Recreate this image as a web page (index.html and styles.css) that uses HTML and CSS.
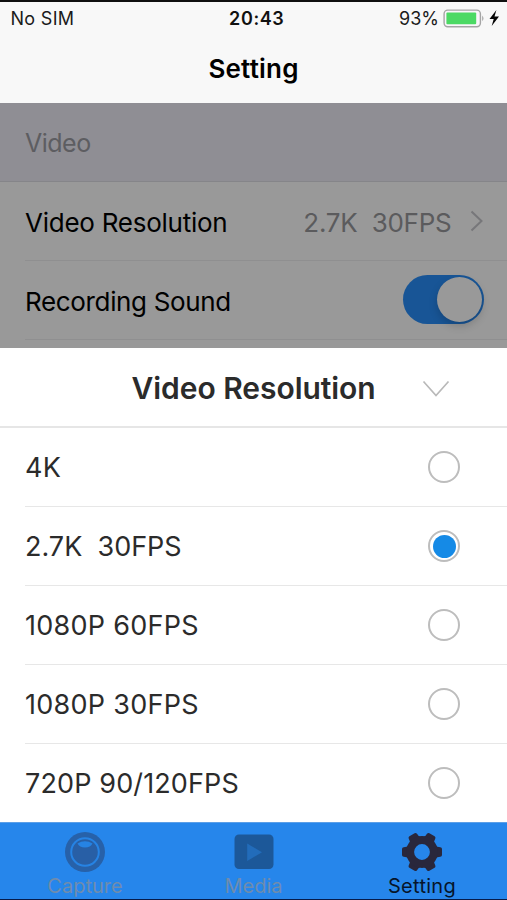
FILE: index.html
```
<!DOCTYPE html>
<html lang="en">
<head>
<meta charset="utf-8">
<title>Setting</title>
<link rel="stylesheet" href="styles.css">
</head>
<body>
<div class="screen">
  <header class="top">
    <div class="status">
      <span class="carrier">No SIM</span>
      <span class="clock">20:43</span>
      <span class="power">
        <span class="percent">93%</span>
        <svg class="battery" width="57" height="20" viewBox="0 0 57 20">
          <rect x="1.1" y="1.1" width="36.3" height="16.6" rx="3.6" fill="#fbf5fb" stroke="#a5a5a5" stroke-width="1.4"/>
          <rect x="3.4" y="3.5" width="29.8" height="11.8" rx="1" fill="#4cd964"/>
          <path d="M39.2 6.500q2.600 2.900 0 5.800z" fill="#a5a5a5"/>
          <path d="M53.400 1 46.500 9.900h4.200l-2 7.100 7.300-9.400h-4.500z" fill="#050505"/>
        </svg>
      </span>
    </div>
    <h1 class="page-title">Setting</h1>
  </header>

  <main class="settings">
    <h2 class="section">Video</h2>
    <div class="setting">
      <span class="name name-resolution">Video Resolution</span>
      <span class="value">2.7K&nbsp; 30FPS</span>
      <svg class="chevron" width="14" height="22" viewBox="0 0 14 22"><path d="M1.5 1.5 11.5 11 1.5 20.5" fill="none" stroke="#77777a" stroke-width="2"/></svg>
    </div>
    <div class="setting">
      <span class="name name-sound">Recording Sound</span>
      <span class="toggle"><span class="knob"></span></span>
    </div>
    <div class="setting setting-cut"></div>
  </main>

  <section class="sheet">
    <div class="sheet-head">
      <h2 class="sheet-title">Video Resolution</h2>
      <svg class="collapse" width="28" height="18" viewBox="0 0 28 18"><path d="M1.5 1.5 14 15.5 26.5 1.5" fill="none" stroke="#b9b9b9" stroke-width="1.7"/></svg>
    </div>
    <ul class="options">
      <li class="option"><span class="label">4K</span><span class="radio"></span></li>
      <li class="option"><span class="label fps-27">2.7K&nbsp; 30FPS</span><span class="radio selected"></span></li>
      <li class="option"><span class="label">1080P 60FPS</span><span class="radio"></span></li>
      <li class="option"><span class="label">1080P 30FPS</span><span class="radio"></span></li>
      <li class="option"><span class="label fps-720">720P 90/120FPS</span><span class="radio"></span></li>
    </ul>
  </section>

  <nav class="tabs">
    <div class="tab">
      <svg width="42" height="42" viewBox="0 0 42 42">
        <circle cx="21" cy="21" r="20" fill="#2761a9"/>
        <circle cx="21" cy="21" r="13.8" fill="#285fa6" stroke="#2683e4" stroke-width="2"/>
        <path d="M13.500 12.500q7.500-4.500 15 0-2 4-7.500 4t-7.500-4z" fill="#2683e4"/>
      </svg>
      <span class="tab-name capture">Capture</span>
    </div>
    <div class="tab">
      <svg width="42" height="42" viewBox="0 0 42 42">
        <rect x="1.500" y="3.500" width="39" height="34.500" rx="4.500" fill="#1c5899"/>
        <path d="M14.200 12.500v17.500L29 21.200z" fill="#226cba"/>
      </svg>
      <span class="tab-name media">Media</span>
    </div>
    <div class="tab active">
      <svg width="42" height="42" viewBox="0 0 42 42">
        <defs>
          <path id="tooth" d="M32 11q2.200 4.500 4.600 4.800l2.700.4q1.700.3 1.700 1.800v6q0 1.500-1.700 1.800l-2.700.4q-2.400.300-4.600 4.800z"/>
        </defs>
        <g fill="#29273c">
          <use href="#tooth"/>
          <use href="#tooth" transform="rotate(60 21 21)"/>
          <use href="#tooth" transform="rotate(120 21 21)"/>
          <use href="#tooth" transform="rotate(180 21 21)"/>
          <use href="#tooth" transform="rotate(240 21 21)"/>
          <use href="#tooth" transform="rotate(300 21 21)"/>
        </g>
        <circle cx="21" cy="21" r="11.900" fill="none" stroke="#29273c" stroke-width="8"/>
      </svg>
      <span class="tab-name setting-name">Setting</span>
    </div>
  </nav>
</div>
</body>
</html>
```
FILE: styles.css
```
* { box-sizing: border-box; }

body {
  margin: 0;
  background: #f8f8f8;
  color: #000;
  font-family: Inter, "Liberation Sans", sans-serif;
}

h1, h2, ul { margin: 0; padding: 0; }

.screen {
  width: 507px;
  height: 900px;
  display: flex;
  flex-direction: column;
  overflow: hidden;
  white-space: nowrap;
}

.top {
  height: 103px;
  flex: none;
  background: #f8f8f8;
  border-top: 2px solid #101010;
}

.status {
  height: 32px;
  padding: 1px 7px 0 10.5px;
  display: grid;
  grid-template-columns: 1fr auto 1fr;
  align-items: center;
  font-size: 18px;
  line-height: 32px;
  color: #1b1b1b;
}

.carrier { letter-spacing: .3px; }

.clock {
  padding-left: 3px;
  font-weight: 600;
  letter-spacing: .6px;
  color: #111;
}

.power {
  display: flex;
  align-items: center;
  justify-content: flex-end;
  gap: 4px;
}

.page-title {
  font-size: 26px;
  font-weight: 600;
  letter-spacing: .2px;
  line-height: 32px;
  padding-top: 19px;
  text-align: center;
}

.settings {
  height: 245px;
  flex: none;
  background: #999;
  overflow: hidden;
}

.section {
  height: 79px;
  padding-left: 25px;
  background: #8f8e94;
  border-bottom: 1px solid #858589;
  color: #5d5d61;
  font-size: 25px;
  font-weight: 400;
  letter-spacing: -.5px;
  line-height: 81px;
}

.setting {
  height: 79px;
  margin-left: 25px;
  padding: 2px 23.5px 0 0;
  display: flex;
  align-items: center;
  border-bottom: 1px solid #8f8f90;
  font-size: 26px;
}

.setting-cut { border: 0; }

.name { flex: 1; }

.name-resolution { letter-spacing: -.25px; }

.name-sound { letter-spacing: -.35px; }

.value {
  color: #5b5b5d;
  letter-spacing: -.25px;
}

.chevron { margin: 0 0 2px 18px; }

.toggle {
  width: 81px;
  height: 49px;
  margin-bottom: 4px;
  padding: 2px;
  border-radius: 25px;
  background: #185596;
  display: flex;
  justify-content: flex-end;
}

.knob {
  width: 45px;
  height: 45px;
  border-radius: 50%;
  background: #999;
  box-shadow: 0 4px 8px rgba(0, 0, 0, .18);
}

.sheet {
  height: 474px;
  flex: none;
  background: #fff;
  color: #2b2b2b;
}

.sheet-head {
  height: 80px;
  padding: 1px 57.5px 0 131.5px;
  display: flex;
  align-items: center;
  justify-content: space-between;
  border-bottom: 2px solid #e6e6e6;
}

.sheet-title {
  font-size: 30px;
  font-weight: 600;
  letter-spacing: -.05px;
  line-height: 36px;
}

.collapse { margin-top: 3px; }

.options { list-style: none; }

.option {
  height: 79px;
  margin-left: 25px;
  padding-right: 47px;
  display: flex;
  align-items: center;
  justify-content: space-between;
  border-bottom: 1px solid #e7e7e7;
  font-size: 27px;
  letter-spacing: .27px;
}

.fps-27 { letter-spacing: 0; }

.fps-720 { letter-spacing: .13px; }

.option:last-child { border-color: transparent; }

.radio {
  width: 32px;
  height: 32px;
  border: 2px solid #bdbdbd;
  border-radius: 50%;
  display: flex;
  align-items: center;
  justify-content: center;
}

.selected::before {
  content: "";
  width: 23px;
  height: 23px;
  border-radius: 50%;
  background: #158ae6;
}

.tabs {
  height: 78px;
  flex: none;
  display: grid;
  grid-template-columns: repeat(3, 1fr);
  background: #2686eb;
  border-top: 1px solid #5b9fe8;
  border-bottom: 1px solid #061b4a;
}

.tab {
  padding-top: 8px;
  display: flex;
  flex-direction: column;
  align-items: center;
  color: #6f8cae;
  font-size: 20px;
}

.tab-name {
  padding-top: 1px;
  line-height: 24px;
}

.capture { padding-left: 1px; }

.tab.active {
  padding-right: 1px;
  color: #06152a;
}

.setting-name { letter-spacing: .3px; }
```
